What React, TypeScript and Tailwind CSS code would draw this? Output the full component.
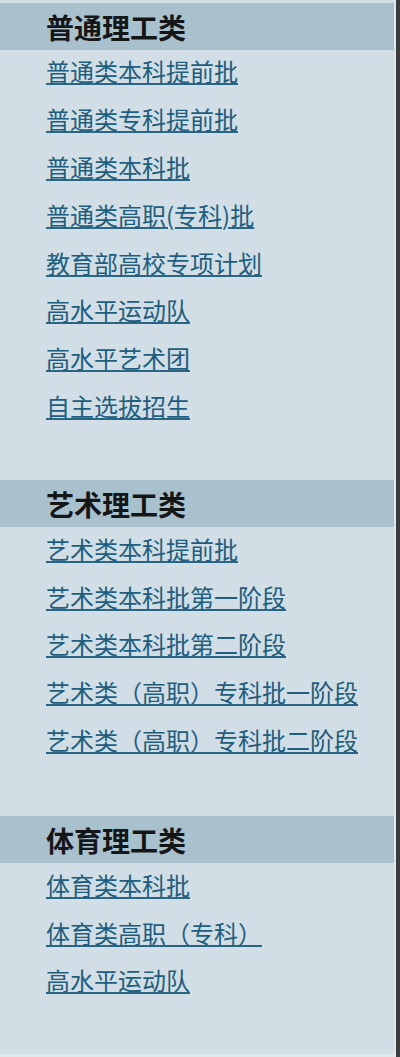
import React from "react";

const sections: { title: string; links: string[]; mb: string }[] = [
  {
    title: "普通理工类",
    mb: "mb-[48px]",
    links: [
      "普通类本科提前批",
      "普通类专科提前批",
      "普通类本科批",
      "普通类高职(专科)批",
      "教育部高校专项计划",
      "高水平运动队",
      "高水平艺术团",
      "自主选拔招生",
    ],
  },
  {
    title: "艺术理工类",
    mb: "mb-[50px]",
    links: [
      "艺术类本科提前批",
      "艺术类本科批第一阶段",
      "艺术类本科批第二阶段",
      "艺术类（高职）专科批一阶段",
      "艺术类（高职）专科批二阶段",
    ],
  },
  {
    title: "体育理工类",
    mb: "mb-0",
    links: ["体育类本科批", "体育类高职（专科）", "高水平运动队"],
  },
];

export default function App() {
  return (
    <div
      className="w-[400px] h-[1057px] flex bg-[#d1dee6] overflow-hidden"
      style={{ fontFamily: '"Noto Sans CJK SC", "Noto Sans", sans-serif' }}
    >
      <div className="flex-1 flex flex-col pt-[3px] border-b-[3px] border-[#e0e8ec]">
        {sections.map((s) => (
          <div key={s.title} className={`flex flex-col ${s.mb}`}>
            <div className="h-[47px] bg-[#a9c1cc] flex items-center pl-[46px] text-[28px] font-bold text-[#141618] leading-none">
              {s.title}
            </div>
            <ul className="flex flex-col">
              {s.links.map((l) => (
                <li key={l} className="h-[47.8px] flex items-center pl-[46px] pb-[5px]">
                  <a
                    href="#"
                    className="text-[24px] leading-none text-[#215d7d] underline underline-offset-[2px] decoration-[1.5px] decoration-[#2a6585]"
                  >
                    {l}
                  </a>
                </li>
              ))}
            </ul>
          </div>
        ))}
      </div>
      <div className="w-[2px] bg-[#e2e9ed]" />
      <div className="w-[4px] bg-[#3b3e40]" />
    </div>
  );
}
